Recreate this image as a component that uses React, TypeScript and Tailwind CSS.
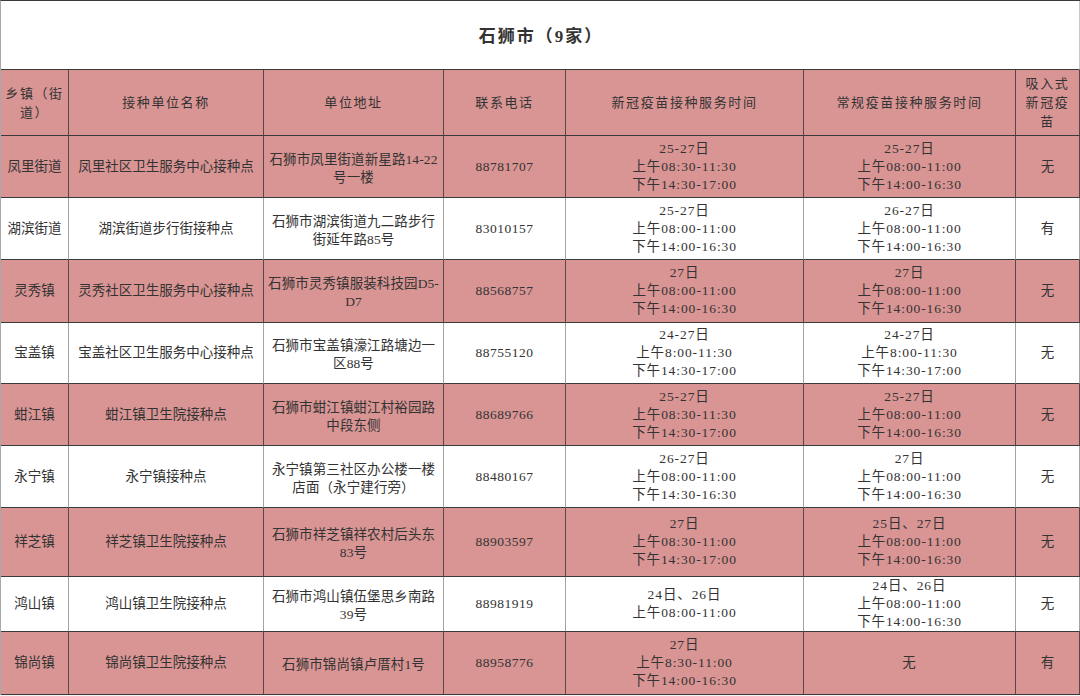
const cols = "grid grid-cols-[68px_195px_180px_122px_238px_212px_64px]";

type Row = {
  town: string;
  name: string;
  addr: string;
  tel: string;
  covid: string;
  regular: string;
  inhaled: string;
  pink: boolean;
  h: string;
};

const rows: Row[] = [
  {
    town: "凤里街道",
    name: "凤里社区卫生服务中心接种点",
    addr: "石狮市凤里街道新星路14-22\n号一楼",
    tel: "88781707",
    covid: "25-27日\n上午08:30-11:30\n下午14:30-17:00",
    regular: "25-27日\n上午08:00-11:00\n下午14:00-16:30",
    inhaled: "无",
    pink: true,
    h: "h-[62px]",
  },
  {
    town: "湖滨街道",
    name: "湖滨街道步行街接种点",
    addr: "石狮市湖滨街道九二路步行\n街延年路85号",
    tel: "83010157",
    covid: "25-27日\n上午08:00-11:00\n下午14:00-16:30",
    regular: "26-27日\n上午08:00-11:00\n下午14:00-16:30",
    inhaled: "有",
    pink: false,
    h: "h-[62px]",
  },
  {
    town: "灵秀镇",
    name: "灵秀社区卫生服务中心接种点",
    addr: "石狮市灵秀镇服装科技园D5-\nD7",
    tel: "88568757",
    covid: "27日\n上午08:00-11:00\n下午14:00-16:30",
    regular: "27日\n上午08:00-11:00\n下午14:00-16:30",
    inhaled: "无",
    pink: true,
    h: "h-[63px]",
  },
  {
    town: "宝盖镇",
    name: "宝盖社区卫生服务中心接种点",
    addr: "石狮市宝盖镇濠江路塘边一\n区88号",
    tel: "88755120",
    covid: "24-27日\n上午8:00-11:30\n下午14:30-17:00",
    regular: "24-27日\n上午8:00-11:30\n下午14:30-17:00",
    inhaled: "无",
    pink: false,
    h: "h-[61px]",
  },
  {
    town: "蚶江镇",
    name: "蚶江镇卫生院接种点",
    addr: "石狮市蚶江镇蚶江村裕园路\n中段东侧",
    tel: "88689766",
    covid: "25-27日\n上午08:30-11:30\n下午14:30-17:00",
    regular: "25-27日\n上午08:00-11:00\n下午14:00-16:30",
    inhaled: "无",
    pink: true,
    h: "h-[62px]",
  },
  {
    town: "永宁镇",
    name: "永宁镇接种点",
    addr: "永宁镇第三社区办公楼一楼\n店面（永宁建行旁）",
    tel: "88480167",
    covid: "26-27日\n上午08:00-11:00\n下午14:30-16:30",
    regular: "27日\n上午08:00-11:00\n下午14:00-16:30",
    inhaled: "无",
    pink: false,
    h: "h-[62px]",
  },
  {
    town: "祥芝镇",
    name: "祥芝镇卫生院接种点",
    addr: "石狮市祥芝镇祥农村后头东\n83号",
    tel: "88903597",
    covid: "27日\n上午08:30-11:00\n下午14:30-17:00",
    regular: "25日、27日\n上午08:00-11:00\n下午14:00-16:30",
    inhaled: "无",
    pink: true,
    h: "h-[69px]",
  },
  {
    town: "鸿山镇",
    name: "鸿山镇卫生院接种点",
    addr: "石狮市鸿山镇伍堡思乡南路\n39号",
    tel: "88981919",
    covid: "24日、26日\n上午08:00-11:00",
    regular: "24日、26日\n上午08:00-11:00\n下午14:00-16:30",
    inhaled: "无",
    pink: false,
    h: "h-[54px]",
  },
  {
    town: "锦尚镇",
    name: "锦尚镇卫生院接种点",
    addr: "石狮市锦尚镇卢厝村1号",
    tel: "88958776",
    covid: "27日\n上午8:30-11:00\n下午14:00-16:30",
    regular: "无",
    inhaled: "有",
    pink: true,
    h: "h-[64px]",
  },
];

const headers = [
  "乡镇（街\n道）",
  "接种单位名称",
  "单位地址",
  "联系电话",
  "新冠疫苗接种服务时间",
  "常规疫苗接种服务时间",
  "吸入式\n新冠疫\n苗",
];

function Cell({
  children,
  pink,
  className = "",
}: {
  children: React.ReactNode;
  pink: boolean;
  className?: string;
}) {
  return (
    <div
      className={`flex items-center justify-center text-center whitespace-pre-line border-r border-b border-b-[#3a3a3a] ${
        pink ? "border-r-[#5a4646]" : "border-r-[#a3a3a3]"
      } ${className}`}
    >
      {children}
    </div>
  );
}

export default function App() {
  return (
    <div className="w-[1080px] h-[696px] bg-[#f4f4f4] text-[#333] overflow-hidden">
      <div className="font-['Liberation_Serif','Noto_Sans_CJK_SC',serif] border-l border-t border-l-[#a8a8a8] border-t-[#3a3a3a] bg-white">
        {/* Title */}
        <div className="h-[69px] flex items-center justify-center pt-[3px] border-r border-b border-r-[#c8c8c8] border-b-[#3a3a3a] bg-white">
          <span className="text-[17px] font-bold tracking-[2px] text-[#333] pl-[2px]">
            石狮市（9家）
          </span>
        </div>

        {/* Header */}
        <div className={`${cols} h-[66px] bg-[#d99594]`}>
          {headers.map((h) => (
            <Cell
              key={h}
              pink
              className="text-[13px] leading-[19px] tracking-[1.6px] px-[2px]"
            >
              {h}
            </Cell>
          ))}
        </div>

        {/* Body */}
        {rows.map((r) => (
          <div
            key={r.town}
            className={`${cols} ${r.h} ${r.pink ? "bg-[#d99594]" : "bg-white"} text-[13.5px] leading-[18px]`}
          >
            <Cell pink={r.pink}>{r.town}</Cell>
            <Cell pink={r.pink}>{r.name}</Cell>
            <Cell pink={r.pink} className="tracking-[0.1px] pt-[4px]">
              {r.addr}
            </Cell>
            <Cell pink={r.pink} className="tracking-[0.5px]">
              {r.tel}
            </Cell>
            <Cell pink={r.pink} className="tracking-[0.9px]">
              {r.covid}
            </Cell>
            <Cell pink={r.pink} className="tracking-[0.9px]">
              {r.regular}
            </Cell>
            <Cell pink={r.pink}>{r.inhaled}</Cell>
          </div>
        ))}
      </div>
    </div>
  );
}
